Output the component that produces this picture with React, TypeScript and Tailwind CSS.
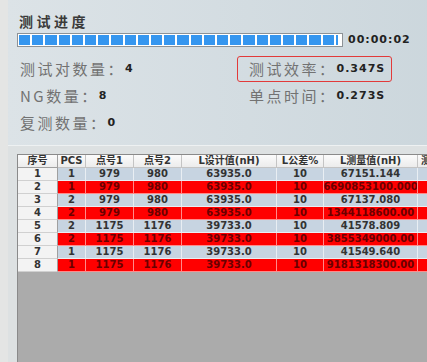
const cols = [40, 28, 48, 48, 95, 47, 94, 40]
const heads = ["序号", "PCS", "点号1", "点号2", "L设计值(nH)", "L公差%", "L测量值(nH)", "测量"]

const rows = [
    ["1", "1", "979", "980", "63935.0", "10", "67151.144"],
    ["2", "1", "979", "980", "63935.0", "10", "6690853100.000"],
    ["3", "2", "979", "980", "63935.0", "10", "67137.080"],
    ["4", "2", "979", "980", "63935.0", "10", "1344118600.00"],
    ["5", "2", "1175", "1176", "39733.0", "10", "41578.809"],
    ["6", "2", "1175", "1176", "39733.0", "10", "3855349000.00"],
    ["7", "1", "1175", "1176", "39733.0", "10", "41549.640"],
    ["8", "1", "1175", "1176", "39733.0", "10", "9181318300.00"],
]

const cjk = { fontFamily: '"Noto Sans CJK SC", sans-serif' }
const num = { fontFamily: '"DejaVu Sans", "Noto Sans CJK SC", sans-serif' }

function Stat({ label, value }: { label: string; value: string }) {
    return (
        <div className="flex items-center">
            <span className="text-[15px] tracking-[2.5px] text-[#727272]" style={cjk}>{label}：</span>
            <span className="text-[11px] font-bold tracking-[1px] text-[#222]" style={num}>{value}</span>
        </div>
    )
}

function ProgressBar() {
    return (
        <div className="mt-[2px] ml-[-2px] flex h-[14px] w-[326px] border border-[#8d9296] bg-white p-[1px]">
            <div className="flex flex-1 gap-[2px]">
                {Array.from({ length: 24 }).map((_, i) => (
                    <div key={i} className="flex-1 bg-[#3596ef]" />
                ))}
                <div className="w-[2px] bg-[#3596ef]" />
                <div className="w-[1px]" />
            </div>
        </div>
    )
}

export default function App() {
    return (
        <div className="flex h-[362px] w-[427px] overflow-hidden bg-[#e3e4e3]">
            <div className="w-[8px] shrink-0 bg-[#e4e5e4]" />
            <div className="flex flex-1 flex-col">
                <div className="h-[146px] shrink-0 border-b border-[#eef1f2] bg-linear-to-r from-[#dce3e7] to-[#cbd6dc] pl-[11px] pt-[12px]">
                    <div className="h-[18px] text-[14px] font-bold leading-[18px] tracking-[3.5px] text-[#3a3a3a]" style={cjk}>
                        测试进度
                    </div>
                    <div className="flex items-center">
                        <ProgressBar />
                        <span className="ml-[5px] mt-[2px] text-[11px] font-bold tracking-[1px] text-[#222]" style={num}>00:00:02</span>
                    </div>
                    <div className="mt-[7px] flex flex-col">
                        <div className="flex h-[27px] items-center">
                            <div className="w-[218px] pl-[1px]"><Stat label="测试对数量" value="4" /></div>
                            <div className="flex h-[26px] w-[155px] items-center rounded-[3px] border-[1.5px] border-[#e23a3a] pl-[11px]">
                                <Stat label="测试效率" value="0.347S" />
                            </div>
                        </div>
                        <div className="flex h-[27px] items-center">
                            <div className="w-[218px] pl-[1px]"><Stat label="NG数量" value="8" /></div>
                            <div className="flex h-[26px] w-[155px] items-center pl-[12px]">
                                <Stat label="单点时间" value="0.273S" />
                            </div>
                        </div>
                        <div className="flex h-[27px] items-center">
                            <div className="w-[218px] pl-[1px]"><Stat label="复测数量" value="0" /></div>
                        </div>
                    </div>
                </div>
                <div className="flex flex-1 bg-[#dde1e2] pl-[9px] pt-[8px]">
                    <div className="flex-1 overflow-hidden border-l border-t border-[#8a8a8a] bg-[#ababab]">
                        <div className="flex h-[13px]">
                            {heads.map((h, i) => (
                                <div
                                    key={h}
                                    className={`flex shrink-0 items-center overflow-hidden whitespace-nowrap border-b border-r bg-linear-to-b from-[#fbfbfb] to-[#ececec] text-[10px] font-semibold leading-none text-[#333] ${i === 0 ? "border-[#a0a0a0]" : "border-[#c4c4c4]"} ${i === 7 ? "justify-start pl-[3px]" : "justify-center"}`}
                                    style={{ ...num, width: cols[i] }}
                                >
                                    {h}
                                </div>
                            ))}
                        </div>
                        {rows.map((r, ri) => {
                            const red = ri % 2 === 1
                            return (
                                <div key={ri} className="flex h-[13px]">
                                    {cols.map((w, ci) => {
                                        const v = r[ci] ?? ""
                                        if (ci === 0) {
                                            return (
                                                <div
                                                    key={ci}
                                                    className="flex shrink-0 items-center justify-center border-b border-r border-b-[#d0d0d0] border-r-[#a0a0a0] bg-[#f3f3f3] text-[10px] font-bold leading-none text-[#333]"
                                                    style={{ ...num, width: w }}
                                                >
                                                    {v}
                                                </div>
                                            )
                                        }
                                        return (
                                            <div
                                                key={ci}
                                                className={`flex shrink-0 items-center justify-center overflow-hidden whitespace-nowrap border-b border-r text-[10px] font-bold leading-none ${red ? "border-[#ff8a8a] bg-[#ff0000] text-[#6a0000]" : "border-[#e9eef3] bg-[#c7d4e1] text-[#333]"}`}
                                                style={{ ...num, width: w }}
                                            >
                                                {v}
                                            </div>
                                        )
                                    })}
                                </div>
                            )
                        })}
                    </div>
                </div>
            </div>
        </div>
    )
}
